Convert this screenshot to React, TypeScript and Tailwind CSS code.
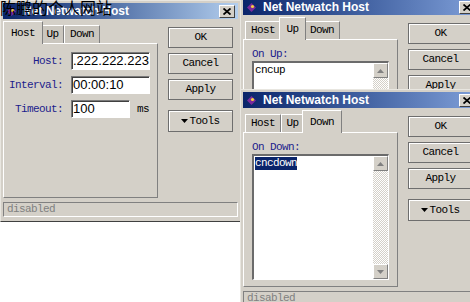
import React from 'react'

const mono = "font-['Liberation_Mono',monospace] text-[11px] tracking-[-0.6px]"
const navy = 'text-[#1c1c8c]'

const TitleIcon = () => (
  <svg width="9" height="9" viewBox="0 0 9 9">
    <polygon points="4.5,0 9,4.5 4.5,9 0,4.5" fill="#7a2a9c" />
    <circle cx="5.5" cy="3.5" r="1.6" fill="#f4d03f" />
  </svg>
)

const CloseBtn = () => (
  <div className="w-[16px] h-[13px] flex items-center justify-center bg-[#d4d0c8] border border-t-white border-l-white border-r-[#404040] border-b-[#404040]">
    <svg width="8" height="7" viewBox="0 0 8 7">
      <path d="M0.5 0.5L7.5 6.5M7.5 0.5L0.5 6.5" stroke="#000" strokeWidth="1.8" />
    </svg>
  </div>
)

const Btn = ({ children, className = '' }: { children: React.ReactNode; className?: string }) => (
  <div
    className={`h-[21px] flex items-center justify-center bg-[#d4d0c8] border border-[#6e6e6e] shadow-[inset_1px_1px_0_#ffffff] text-black ${mono} ${className}`}
  >
    {children}
  </div>
)

const Tab = ({ label, active, width }: { label: string; active: boolean; width: string }) =>
  active ? (
    <div
      className={`relative z-10 box-content -mx-[2px] px-[2px] -mb-px h-[22px] bg-[#d4d0c8] border-t border-l border-r border-t-white border-l-white border-r-[#808080] flex items-center justify-center text-black ${mono} ${width}`}
    >
      {label}
    </div>
  ) : (
    <div
      className={`box-content h-[17px] bg-[#cbc7bf] border-t border-l border-r border-t-white border-l-white border-r-[#808080] flex items-center justify-center text-black ${mono} ${width}`}
    >
      {label}
    </div>
  )

const Arrow = ({ down }: { down?: boolean }) => (
  <div className="w-[15px] h-[15px] flex items-center justify-center bg-[#d4d0c8] border border-t-white border-l-white border-r-[#808080] border-b-[#808080]">
    <svg width="7" height="4" viewBox="0 0 7 4">
      <polygon points={down ? '0,0 7,0 3.5,4' : '0,4 7,4 3.5,0'} fill="#808080" />
    </svg>
  </div>
)

const Win = ({
  className,
  grad,
  tab,
  children,
}: {
  className: string
  grad: string
  tab: string
  children: React.ReactNode
}) => (
  <div
    className={`absolute w-[241px] h-[222px] p-[2px] bg-[#d4d0c8] border border-t-[#e8e6e0] border-l-[#e8e6e0] border-r-[#404040] border-b-[#404040] ${className}`}
  >
    <div className={`h-[16px] flex items-center pl-[4px] pr-[3px] ${grad}`}>
      <TitleIcon />
      <span className="ml-[7px] text-white font-bold text-[12px] font-['Liberation_Sans',Arial,sans-serif] whitespace-nowrap">
        Net Netwatch Host
      </span>
      <div className="ml-auto">
        <CloseBtn />
      </div>
    </div>
    <div className="mt-[3px] flex">
      <div className="w-[155px]">
        <div className="flex items-end h-[21px] pl-[2px]">
          <Tab label="Host" active={tab === 'Host'} width="w-[34px]" />
          <Tab label="Up" active={tab === 'Up'} width="w-[21px]" />
          <Tab label="Down" active={tab === 'Down'} width="w-[34px]" />
        </div>
        <div className="h-[155px] border border-t-white border-l-white border-r-[#808080] border-b-[#808080]">
          {children}
        </div>
      </div>
      <div className="ml-[10px] mt-[5px] w-[65px] flex flex-col gap-[5px]">
        <Btn>OK</Btn>
        <Btn>Cancel</Btn>
        <Btn>Apply</Btn>
        <Btn className="mt-[5px] h-[22px]">
          <svg width="7" height="4" viewBox="0 0 7 4" className="mr-[1px]">
            <polygon points="0,0 7,0 3.5,4" fill="#000" />
          </svg>
          Tools
        </Btn>
      </div>
    </div>
    <div
      className={`mt-[4px] h-[15px] flex items-center pl-[3px] border border-t-[#808080] border-l-[#808080] border-r-white border-b-white text-[#808080] ${mono}`}
    >
      disabled
    </div>
  </div>
)

const Field = ({ label, value, width, unit }: { label: string; value: string; width: string; unit?: string }) => (
  <div className="flex items-center h-[18px]">
    <div className={`w-[59px] text-right ${navy} ${mono}`}>{label}</div>
    <div
      className={`ml-[8px] h-[18px] bg-white flex items-center pl-[1px] overflow-hidden whitespace-nowrap border border-t-[#7a7a7a] border-l-[#7a7a7a] border-r-white border-b-white shadow-[inset_1px_1px_0_#404040] text-[13px] text-black font-['Liberation_Sans',Arial,sans-serif] ${width}`}
    >
      {value}
    </div>
    {unit && <div className={`ml-[7px] text-black ${mono}`}>{unit}</div>}
  </div>
)

const Script = ({ label, text, selected }: { label: string; text: string; selected?: boolean }) => (
  <div className="px-[8px] pt-[8px]">
    <div className={`h-[13px] leading-[13px] ${navy} ${mono}`}>{label}</div>
    <div className="h-[126px] flex bg-white border-t-2 border-l-2 border-t-[#6b6b6b] border-l-[#6b6b6b] border-r border-b border-r-white border-b-white">
      <div className={`flex-1 pl-[1px] pt-[1px] leading-[13px] ${mono}`}>
        <span className={`inline-block leading-[13px] ${selected ? 'bg-[#0a246a] text-white' : 'text-black'}`}>{text}</span>
      </div>
      <div className="w-[15px] flex flex-col">
        <Arrow />
        <div className="flex-1 bg-[repeating-conic-gradient(#d4d0c8_0_25%,#ffffff_0_50%)] bg-[length:2px_2px]" />
        <Arrow down />
      </div>
    </div>
  </div>
)

export default function App() {
  return (
    <div className="relative w-[470px] h-[302px] overflow-hidden bg-white">
      <Win className="left-0 top-0" grad="bg-linear-to-r from-[#0a246a] to-[#b4cfee]" tab="Host">
        <div className="pt-[8px] flex flex-col gap-[6px]">
          <Field label="Host:" value=".222.222.223" width="w-[79px]" />
          <Field label="Interval:" value="00:00:10" width="w-[79px]" />
          <Field label="Timeout:" value="100" width="w-[59px]" unit="ms" />
        </div>
      </Win>
      <Win className="left-[240px] top-[-4px]" grad="bg-linear-to-r from-[#0a246a] to-[#7f9fd8]" tab="Up">
        <Script label="On Up:" text="cncup" />
      </Win>
      <Win className="left-[240px] top-[89px]" grad="bg-linear-to-r from-[#0a246a] to-[#7f9fd8]" tab="Down">
        <Script label="On Down:" text="cncdown" selected />
      </Win>
      <div className="absolute left-0 top-[-2px] text-[16px] leading-[18px] text-black font-['Noto_Sans_CJK_SC',sans-serif] whitespace-nowrap">
        陈鹏的个人网站
      </div>
    </div>
  )
}
